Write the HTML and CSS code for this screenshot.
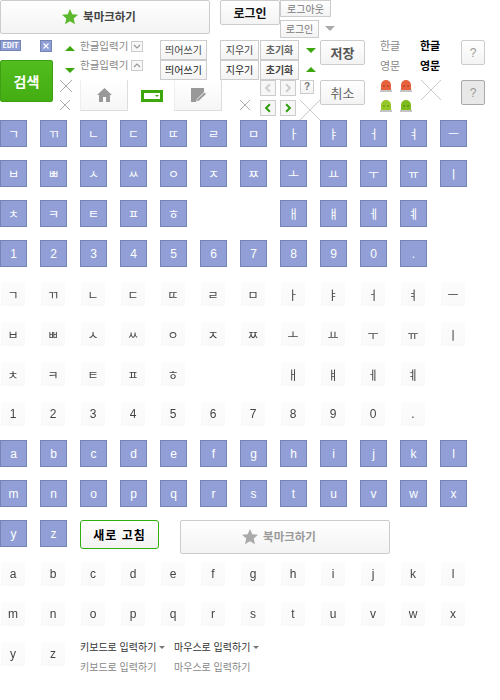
FILE: index.html
```html
<!DOCTYPE html>
<html lang="ko">
<head>
  <meta charset="UTF-8">
  <title>키보드 버튼 이미지</title>
  <link rel="stylesheet" href="styles.css">
</head>
<body>

  <!-- 위쪽 버튼 모음 -->
  <div class="sheet">
    <div class="btn bookmark"><svg class="star" viewBox="0 0 16 16"><path d="M8 0l2.300 5.200 5.700.6-4.300 3.800 1.300 5.600L8 12.300l-5 2.900 1.300-5.600L0 5.800l5.700-.6z" fill="#5cb82c"/></svg>북마크하기</div>

    <div class="badge edit">EDIT</div>
    <div class="badge close"><svg viewBox="0 0 10 10"><path d="M2.500 2.500l5 5M7.500 2.500l-5 5" stroke="#fff" stroke-width="1.200"/></svg></div>

    <div class="tri up green t1"></div>
    <div class="tri down green t2"></div>
    <div class="label ime1">한글입력기</div>
    <div class="mini m1"><svg viewBox="0 0 10 9"><path d="M2 3l3 3 3-3" fill="none" stroke="#999" stroke-width="1.200"/></svg></div>
    <div class="label ime2">한글입력기</div>
    <div class="mini m2"><svg viewBox="0 0 10 9"><path d="M2 6l3-3 3 3" fill="none" stroke="#999" stroke-width="1.200"/></svg></div>

    <div class="search">검색</div>

    <svg class="cross c1" viewBox="0 0 12 12"><path d="M0 0l12 12M12 0L0 12" stroke="#aaa"/></svg>
    <svg class="cross c2" viewBox="0 0 10 10"><path d="M0 0l10 10M10 0L0 10" stroke="#aaa"/></svg>
    <svg class="cross c3" viewBox="0 0 10 10"><path d="M0 0l10 10M10 0L0 10" stroke="#aaa"/></svg>
    <svg class="cross c4" viewBox="0 0 20 20"><path d="M0 0l20 20M20 0L0 20" stroke="#ccc"/></svg>
    <svg class="cross c5" viewBox="0 0 20 20"><path d="M0 0l20 20M20 0L0 20" stroke="#ccc"/></svg>

    <div class="tab home"><svg viewBox="0 0 15 14"><path d="M7.500 0L0 7h2v7h4V9h3v5h4V7h2z" fill="#999"/></svg></div>
    <div class="select-box"><i></i></div>
    <div class="tab note"><svg viewBox="0 0 15 14"><path d="M0 0h13v4L6 11l-1 3H0z" fill="#999"/><path d="M13.500 4.500L15 6l-7 6.500-2 1 .7-2.200z" fill="#999"/></svg></div>

    <div class="btn small sp1">띄어쓰기</div>
    <div class="btn small sp2">띄어쓰기</div>
    <div class="btn small er1">지우기</div>
    <div class="btn small er2">지우기</div>
    <div class="btn small re1">초기화</div>
    <div class="btn small re2">초기화</div>

    <div class="btn login-big">로그인</div>
    <div class="btn small logout">로그아웃</div>
    <div class="btn small login">로그인</div>
    <div class="tri down gray t3"></div>

    <div class="tri down green t4"></div>
    <div class="tri up green t5"></div>

    <div class="btn big save">저장</div>
    <div class="btn big cancel">취소</div>

    <div class="btn nav n1"><svg viewBox="0 0 8 8"><path d="M5.500 1L2.500 4l3 3" fill="none" stroke="#ccc" stroke-width="1.600"/></svg></div>
    <div class="btn nav n2"><svg viewBox="0 0 8 8"><path d="M2.500 1l3 3-3 3" fill="none" stroke="#ccc" stroke-width="1.600"/></svg></div>
    <div class="btn help-mini">?</div>
    <div class="btn nav n3"><svg viewBox="0 0 8 8"><path d="M5.500 1L2.500 4l3 3" fill="none" stroke="#2f9e0a" stroke-width="1.600"/></svg></div>
    <div class="btn nav n4"><svg viewBox="0 0 8 8"><path d="M2.500 1l3 3-3 3" fill="none" stroke="#2f9e0a" stroke-width="1.600"/></svg></div>

    <div class="lang l1">한글</div>
    <div class="lang l2">영문</div>
    <div class="lang bold l3">한글</div>
    <div class="lang bold l4">영문</div>

    <svg class="lamp r1" viewBox="0 0 12 12"><path d="M1 10V5a5 5 0 0 1 10 0v5z" fill="#e8613e"/><path d="M3 6h2M7 6h2" stroke="#a83a1c"/><path d="M0 10h12v2H0z" fill="#c4c4c4"/></svg>
    <svg class="lamp r2" viewBox="0 0 12 12"><path d="M1 10V5a5 5 0 0 1 10 0v5z" fill="#e8613e"/><path d="M3 6h2M7 6h2" stroke="#a83a1c"/><path d="M0 10h12v2H0z" fill="#c4c4c4"/></svg>
    <svg class="lamp g1" viewBox="0 0 12 12"><path d="M1 10V5a5 5 0 0 1 10 0v5z" fill="#96c82a"/><path d="M3 6h2M7 6h2" stroke="#5d8a10"/><path d="M0 10h12v2H0z" fill="#c4c4c4"/></svg>
    <svg class="lamp g2" viewBox="0 0 12 12"><path d="M1 10V5a5 5 0 0 1 10 0v5z" fill="#80bb1e"/><path d="M3 6h2M7 6h2" stroke="#4d7d0c"/><path d="M0 10h12v2H0z" fill="#c4c4c4"/></svg>

    <div class="btn help h1">?</div>
    <div class="btn help h2">?</div>
  </div>

  <!-- 자판 -->
  <div class="keys jamo">
    <span class="key blue">ㄱ</span><span class="key blue">ㄲ</span><span class="key blue">ㄴ</span><span class="key blue">ㄷ</span><span class="key blue">ㄸ</span><span class="key blue">ㄹ</span><span class="key blue">ㅁ</span><span class="key blue">ㅏ</span><span class="key blue">ㅑ</span><span class="key blue">ㅓ</span><span class="key blue">ㅕ</span><span class="key blue">ㅡ</span>
    <span class="key blue">ㅂ</span><span class="key blue">ㅃ</span><span class="key blue">ㅅ</span><span class="key blue">ㅆ</span><span class="key blue">ㅇ</span><span class="key blue">ㅈ</span><span class="key blue">ㅉ</span><span class="key blue">ㅗ</span><span class="key blue">ㅛ</span><span class="key blue">ㅜ</span><span class="key blue">ㅠ</span><span class="key blue">ㅣ</span>
    <span class="key blue">ㅊ</span><span class="key blue">ㅋ</span><span class="key blue">ㅌ</span><span class="key blue">ㅍ</span><span class="key blue">ㅎ</span><span class="key blue col8">ㅐ</span><span class="key blue">ㅒ</span><span class="key blue">ㅔ</span><span class="key blue">ㅖ</span>
  </div>
  <div class="keys">
    <span class="key blue">1</span><span class="key blue">2</span><span class="key blue">3</span><span class="key blue">4</span><span class="key blue">5</span><span class="key blue">6</span><span class="key blue">7</span><span class="key blue">8</span><span class="key blue">9</span><span class="key blue">0</span><span class="key blue">.</span>
  </div>
  <div class="keys jamo">
    <span class="key">ㄱ</span><span class="key">ㄲ</span><span class="key">ㄴ</span><span class="key">ㄷ</span><span class="key">ㄸ</span><span class="key">ㄹ</span><span class="key">ㅁ</span><span class="key">ㅏ</span><span class="key">ㅑ</span><span class="key">ㅓ</span><span class="key">ㅕ</span><span class="key">ㅡ</span>
    <span class="key">ㅂ</span><span class="key">ㅃ</span><span class="key">ㅅ</span><span class="key">ㅆ</span><span class="key">ㅇ</span><span class="key">ㅈ</span><span class="key">ㅉ</span><span class="key">ㅗ</span><span class="key">ㅛ</span><span class="key">ㅜ</span><span class="key">ㅠ</span><span class="key">ㅣ</span>
    <span class="key">ㅊ</span><span class="key">ㅋ</span><span class="key">ㅌ</span><span class="key">ㅍ</span><span class="key">ㅎ</span><span class="key col8">ㅐ</span><span class="key">ㅒ</span><span class="key">ㅔ</span><span class="key">ㅖ</span>
  </div>
  <div class="keys">
    <span class="key">1</span><span class="key">2</span><span class="key">3</span><span class="key">4</span><span class="key">5</span><span class="key">6</span><span class="key">7</span><span class="key">8</span><span class="key">9</span><span class="key">0</span><span class="key">.</span>
  </div>
  <div class="keys">
    <span class="key blue">a</span><span class="key blue">b</span><span class="key blue">c</span><span class="key blue">d</span><span class="key blue">e</span><span class="key blue">f</span><span class="key blue">g</span><span class="key blue">h</span><span class="key blue">i</span><span class="key blue">j</span><span class="key blue">k</span><span class="key blue">l</span>
    <span class="key blue">m</span><span class="key blue">n</span><span class="key blue">o</span><span class="key blue">p</span><span class="key blue">q</span><span class="key blue">r</span><span class="key blue">s</span><span class="key blue">t</span><span class="key blue">u</span><span class="key blue">v</span><span class="key blue">w</span><span class="key blue">x</span>
    <span class="key blue">y</span><span class="key blue">z</span>
    <div class="actions">
      <div class="btn refresh">새로 고침</div>
      <div class="btn bookmark off"><svg class="star" viewBox="0 0 16 16"><path d="M8 0l2.300 5.200 5.700.6-4.300 3.800 1.300 5.600L8 12.300l-5 2.900 1.300-5.600L0 5.800l5.700-.6z" fill="#aaa"/></svg>북마크하기</div>
    </div>

    <span class="key">a</span><span class="key">b</span><span class="key">c</span><span class="key">d</span><span class="key">e</span><span class="key">f</span><span class="key">g</span><span class="key">h</span><span class="key">i</span><span class="key">j</span><span class="key">k</span><span class="key">l</span>
    <span class="key">m</span><span class="key">n</span><span class="key">o</span><span class="key">p</span><span class="key">q</span><span class="key">r</span><span class="key">s</span><span class="key">t</span><span class="key">u</span><span class="key">v</span><span class="key">w</span><span class="key">x</span>
    <span class="key">y</span><span class="key">z</span>
    <div class="menus">
      <span class="menu">키보드로 입력하기<i></i></span><span class="menu">마우스로 입력하기<i></i></span>
      <span class="menu dim">키보드로 입력하기</span><span class="menu dim">마우스로 입력하기</span>
    </div>
  </div>

</body>
</html>
```

FILE: styles.css
```css
body {
  margin: 0;
  background: #fff;
  font-family: "Noto Sans CJK KR", "Liberation Sans", sans-serif;
  font-size: 11px;
  color: #444;
}

/* 버튼 이미지가 흩어져 있는 영역 */
.sheet {
  position: relative;
  height: 120px;
}
.sheet > * {
  position: absolute;
  box-sizing: border-box;
}

.btn {
  display: flex;
  align-items: center;
  justify-content: center;
  box-sizing: border-box;
  border: 1px solid #ccc;
  border-radius: 2px;
  background: linear-gradient(to bottom, #ffffff, #f3f3f3);
  color: #444;
  line-height: 1;
}
.bookmark {
  left: 0;
  top: 0;
  width: 210px;
  height: 34px;
  gap: 5px;
  padding-right: 12px;
  font-size: 11.500px;
  font-weight: 700;
}
.bookmark.off {
  color: #999;
}
.star {
  width: 16px;
  height: 16px;
}

.badge {
  background: #919fd6;
  border: 1px solid #7385b4;
  color: #fff;
  font-size: 7px;
  font-weight: 700;
  line-height: 9px;
  text-align: center;
}
.edit { left: 0; top: 40px; width: 21px; height: 11px; }
.close { left: 40px; top: 40px; width: 12px; height: 12px; }
.close svg { display: block; width: 10px; height: 10px; }

.tri {
  width: 0;
  height: 0;
  border-left: 5px solid transparent;
  border-right: 5px solid transparent;
}
.tri.up.green { border-bottom: 5px solid #3fa70e; }
.tri.down.green { border-top: 5px solid #3fa70e; }
.tri.down.gray { border-top: 5px solid #aaa; }
.t1 { left: 65px; top: 46px; }
.t2 { left: 65px; top: 68px; }
.t3 { left: 325px; top: 26px; }
.t4 { left: 306px; top: 48px; }
.t5 { left: 306px; top: 67px; }

.label {
  color: #888;
  font-size: 10.500px;
  line-height: 14px;
  white-space: nowrap;
}
.ime1 { left: 80px; top: 39px; }
.ime2 { left: 80px; top: 58px; }
.mini {
  width: 12px;
  height: 11px;
  border: 1px solid #ccc;
  background: #f8f8f8;
}
.mini svg { display: block; width: 10px; height: 9px; }
.m1 { left: 131px; top: 41px; }
.m2 { left: 131px; top: 60px; }

.search {
  left: 0;
  top: 60px;
  width: 53px;
  height: 42px;
  border: 1px solid #3ea012;
  border-radius: 2px;
  background: linear-gradient(to bottom, #52bd1e, #43ad12);
  color: #fff;
  font-size: 14px;
  font-weight: 700;
  line-height: 40px;
  text-align: center;
}

.cross { display: block; }
.c1 { left: 60px; top: 80px; width: 12px; height: 12px; }
.c2 { left: 60px; top: 100px; width: 10px; height: 10px; }
.c3 { left: 240px; top: 100px; width: 10px; height: 10px; }
.c4 { left: 421px; top: 80px; width: 20px; height: 20px; }
.c5 { left: 300px; top: 100px; width: 20px; height: 20px; }

.tab {
  top: 80px;
  width: 48px;
  height: 31px;
  border-right: 1px solid #ddd;
  border-bottom: 1px solid #ddd;
  border-left: 1px solid #eee;
  background: linear-gradient(to bottom, #fff, #f6f6f6);
}
.tab svg {
  display: block;
  width: 15px;
  height: 14px;
  margin: 8px auto 0;
}
.home { left: 80px; }
.note { left: 174px; }
.select-box {
  left: 141px;
  top: 90px;
  width: 22px;
  height: 12px;
  border: 3px solid #3fa70e;
  background: #fff;
}
.select-box i {
  position: absolute;
  right: 1px;
  top: 2px;
  border-left: 2px solid transparent;
  border-right: 2px solid transparent;
  border-top: 2px solid #3fa70e;
}

.small {
  height: 20px;
  font-size: 10px;
  border-radius: 0;
}
.sp1 { left: 160px; top: 40px; width: 47px; }
.sp2 { left: 160px; top: 60px; width: 47px; color: #222; }
.er1 { left: 220px; top: 40px; width: 39px; }
.er2 { left: 220px; top: 60px; width: 39px; color: #222; }
.re1 { left: 260px; top: 40px; width: 39px; font-weight: 700; color: #666; }
.re2 { left: 260px; top: 60px; width: 39px; font-weight: 700; }
.login-big {
  left: 220px;
  top: 0;
  width: 60px;
  height: 25px;
  color: #111;
  font-size: 12px;
  font-weight: 700;
}
.logout { left: 280px; top: 0; width: 51px; height: 17px; color: #777; }
.login { left: 280px; top: 20px; width: 39px; height: 18px; color: #777; }

.big {
  left: 320px;
  width: 45px;
  height: 25px;
  font-size: 13px;
}
.save { top: 40px; font-weight: 700; color: #555; }
.cancel { top: 80px; color: #666; }

.nav {
  width: 16px;
  height: 16px;
  border-color: #ccc;
  background: #f6f6f6;
  border-radius: 0;
}
.nav svg { display: block; width: 10px; height: 10px; }
.n1 { left: 260px; top: 80px; }
.n2 { left: 280px; top: 80px; }
.n3 { left: 260px; top: 100px; }
.n4 { left: 280px; top: 100px; }
.help-mini {
  left: 300px;
  top: 80px;
  width: 14px;
  height: 14px;
  border-radius: 0;
  color: #777;
  font-size: 10px;
  font-weight: 700;
  font-family: "Liberation Sans", sans-serif;
}

.lang {
  left: 380px;
  color: #888;
  font-size: 11px;
  line-height: 14px;
}
.lang.bold { left: 420px; color: #000; font-weight: 700; }
.l1, .l3 { top: 38px; }
.l2, .l4 { top: 58px; }

.lamp { display: block; width: 12px; height: 12px; }
.r1 { left: 380px; top: 80px; }
.r2 { left: 400px; top: 80px; }
.g1 { left: 380px; top: 100px; }
.g2 { left: 400px; top: 100px; }

.help {
  left: 461px;
  width: 24px;
  height: 25px;
  color: #999;
  font-size: 12px;
  font-family: "Liberation Sans", sans-serif;
}
.h1 { top: 40px; }
.h2 { top: 80px; background: #e8e8e8; border-color: #aaa; }

/* 자판 */
.keys {
  display: grid;
  grid-template-columns: repeat(12, 40px);
  grid-auto-rows: 40px;
  font-family: "Liberation Sans", sans-serif;
}
.keys.jamo {
  font-family: "Noto Sans CJK KR", sans-serif;
}
.key {
  box-sizing: border-box;
  width: 24px;
  height: 24px;
  margin: 2px 0 0 1px;
  display: flex;
  align-items: center;
  justify-content: center;
  background: linear-gradient(to bottom, #fcfcfc, #f9f9f9);
  font-size: 12px;
  color: #444;
  filter: grayscale(1);
}
.key.blue {
  width: 27px;
  height: 27px;
  margin: 0;
  background: #919fd6;
  border: 1px solid #7385b4;
  color: #fff;
  filter: none;
}
.key.col8 { grid-column-start: 8; }

.actions {
  grid-column: 3 / -1;
  display: flex;
  align-items: flex-start;
  gap: 21px;
  font-family: "Noto Sans CJK KR", sans-serif;
}
.refresh {
  width: 79px;
  height: 29px;
  border-color: #2fae0c;
  border-radius: 3px;
  background: linear-gradient(to bottom, #fff, #f2f2f2);
  color: #000;
  font-size: 12px;
  font-weight: 700;
  letter-spacing: 1px;
}
.menus {
  grid-column: 3 / -1;
  display: grid;
  grid-template-columns: 94px 94px;
  grid-auto-rows: 20px;
  align-items: start;
  font-family: "Noto Sans CJK KR", sans-serif;
}
.menu {
  font-size: 10px;
  line-height: 14px;
  color: #333;
  white-space: nowrap;
}
.menu.dim { color: #888; }
.menu i {
  display: inline-block;
  margin: 0 0 2px 3px;
  border-left: 3px solid transparent;
  border-right: 3px solid transparent;
  border-top: 3px solid #777;
}
```
